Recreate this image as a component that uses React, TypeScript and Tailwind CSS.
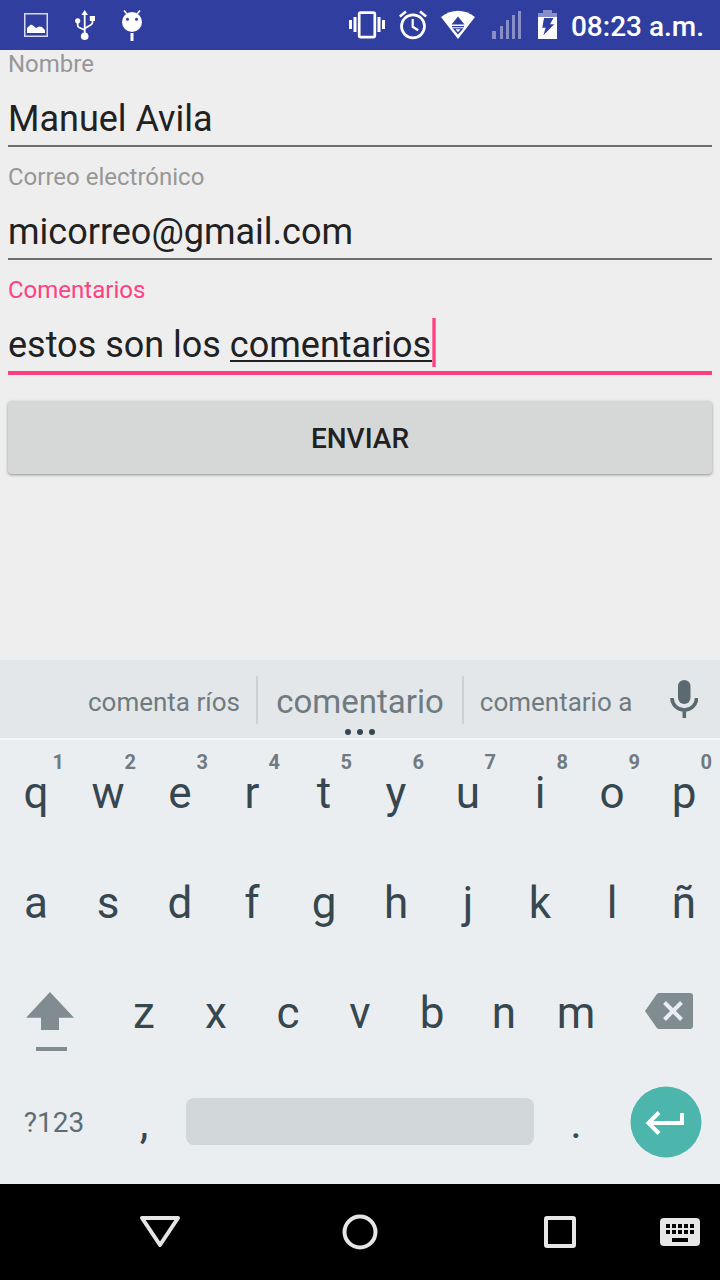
import { useState } from "react";
import type { ReactNode } from "react";

function StatusBar() {
  return (
    <header className="flex h-[50px] items-center justify-between bg-[#303f9f] pl-6 pr-4 text-white">
      <div className="flex items-center gap-[27px]">
        <svg viewBox="24 10 24 30" className="h-[30px] w-6" aria-hidden="true">
          <rect x="24.75" y="13.75" width="22.5" height="22.5" fill="none" stroke="#d6d9ec" strokeWidth="1.5" />
          <path d="M27 33V28l4-3.500 2 1 3 2.500 3-1.500 3 .5 3 3V33z" fill="#fff" />
        </svg>
        <svg viewBox="75 10 20 30" className="h-[30px] w-5" aria-hidden="true">
          <path d="M84.700 13v22M77.700 22v3.500q0 1.500 1.500 2l5.500 2.500M92.500 19v3q0 2-1.500 2.800L84.700 28.500" fill="none" stroke="#fff" strokeWidth="1.8" />
          <path d="M84.700 10l3.300 5h-6.600zM89.800 16h5.200v5h-5.200z" fill="#fff" />
          <circle cx="77.700" cy="20.800" r="2.600" fill="#fff" />
          <circle cx="84.700" cy="36.200" r="3.800" fill="#fff" />
        </svg>
        <svg viewBox="122 10 20 31" className="h-[31px] w-5" aria-hidden="true">
          <circle cx="132" cy="22" r="10" fill="#fff" />
          <path d="M124 10.500l3 3.500M140 10.500l-3 3.500" stroke="#fff" strokeWidth="1.600" />
          <path d="M130.500 33h3v8h-3z" fill="#fff" />
          <circle cx="127.500" cy="19.300" r="1.500" fill="#303f9f" />
          <circle cx="136.500" cy="19.300" r="1.500" fill="#303f9f" />
        </svg>
      </div>
      <div className="flex items-center gap-[14px]">
        <svg viewBox="349 10 36 30" className="h-[30px] w-9" aria-hidden="true">
          <rect x="359.200" y="12.700" width="15.600" height="24.400" rx="1.500" fill="none" stroke="#fff" strokeWidth="2.700" />
          <path d="M349 20h3v9h-3zM353.500 17h3v15h-3zM377.500 17h3v15h-3zM382 20h3v9h-3z" fill="#fff" />
        </svg>
        <svg viewBox="399 10 28 30" className="h-[30px] w-7" aria-hidden="true">
          <circle cx="413" cy="26.300" r="11.500" fill="none" stroke="#fff" strokeWidth="2.700" />
          <path d="M412.700 19v7.800l5.500 3.400" fill="none" stroke="#fff" strokeWidth="2.200" />
          <path d="M399.800 16.500l6.200-5M426.200 16.500l-6.200-5" stroke="#fff" strokeWidth="2.600" />
        </svg>
        <svg viewBox="441 10 37 30" className="h-[30px] w-[37px]" aria-hidden="true">
          <path d="M441 17q17-12.500 34 0L458 39z" fill="#fff" />
          <path d="M458 16.500l6.500 8h-13zM452 26h12v1.300h-12zM452.500 28.300h11l-5.500 6.200z" fill="#303f9f" />
          <path d="M455.500 29.300h5l-2.500 3z" fill="#fff" />
        </svg>
        <svg viewBox="492 10 32 30" className="h-[30px] w-8" aria-hidden="true">
          <path d="M492 31h4v8h-4zM500 26h3v13h-3zM506 20h3v19h-3zM512 15h3v24h-3zM518 11h3v28h-3z" fill="#888fc6" />
        </svg>
        <svg viewBox="538 10 19 30" className="h-[30px] w-[19px]" aria-hidden="true">
          <path d="M543 10h9v3h5v4h-19v-4h5z" fill="#888fc6" />
          <path d="M538 17h19v22h-19z" fill="#fff" />
          <path d="M544 18h9.500L550 24.300h4.300L543.300 35.300l2.400-7.600h-3.400z" fill="#303f9f" />
        </svg>
        <time className="pt-1 text-[28px] leading-8 font-medium whitespace-nowrap">08:23 a.m.</time>
      </div>
    </header>
  );
}

const underlines = {
  idle: "h-[69px] border-b-2 border-[#6e6e6e]",
  active: "h-[71px] border-b-4 border-[#ff4081]",
};

function Field(props: {
  id: string;
  label: string;
  type: string;
  initial: string;
  active?: boolean;
  children?: ReactNode;
}) {
  const [value, setValue] = useState(props.initial);
  return (
    <div>
      <label
        htmlFor={props.id}
        className={`block h-7 text-2xl leading-7 ${props.active ? "text-[#ff4081]" : "text-[#979797]"}`}
      >
        {props.label}
      </label>
      <div className="relative">
        <input
          id={props.id}
          type={props.type}
          value={value}
          onChange={(e) => setValue(e.target.value)}
          className={`block w-full bg-transparent pt-[14px] text-4xl text-[#212121] outline-none ${
            props.active ? underlines.active : underlines.idle
          }`}
        />
        {props.children}
      </div>
    </div>
  );
}

function Suggestions() {
  return (
    <div className="flex h-20 border-b-2 border-[#f3f6f8] bg-[#e3e7ea] pl-[72px] text-[#6f7b80]">
      <button type="button" className="flex-[9] pt-1.5 text-[26px] whitespace-nowrap">
        comenta ríos
      </button>
      <span className="mt-4 mb-3.5 w-0.5 bg-[#cbd0d3]" />
      <button type="button" className="relative flex-[10] pt-1.5 text-[33px]">
        comentario
        <span className="absolute inset-x-0 bottom-[3px] flex justify-center gap-1.5">
          <i className="size-1.5 rounded-full bg-[#37474f]" />
          <i className="size-1.5 rounded-full bg-[#37474f]" />
          <i className="size-1.5 rounded-full bg-[#37474f]" />
        </span>
      </button>
      <span className="mt-4 mb-3.5 w-0.5 bg-[#cbd0d3]" />
      <button type="button" className="flex-[9] pt-1.5 text-[26px] whitespace-nowrap">
        comentario a
      </button>
      <button type="button" aria-label="Voz" className="flex w-[72px] items-center justify-center">
        <svg viewBox="669 680 28 38" className="h-[38px] w-7" aria-hidden="true">
          <rect x="677" y="680" width="12.500" height="24" rx="6.200" fill="#5b6a70" />
          <path d="M671 698a12.300 12 0 0 0 24.600 0M683.300 710v8" fill="none" stroke="#5b6a70" strokeWidth="3.600" />
        </svg>
      </button>
    </div>
  );
}

function Key({ label, hint }: { label: string; hint?: string }) {
  return (
    <button type="button" className="relative col-span-2 pb-1 text-[44px] leading-none text-[#37474f]">
      {label}
      {hint && (
        <span className="absolute top-2.5 right-2 text-xl leading-6 font-bold text-[#6f7b80]">{hint}</span>
      )}
    </button>
  );
}

function Keyboard() {
  return (
    <section aria-label="Teclado" className="border-t-2 border-[#eceff1] bg-[#ebeef1]">
      <Suggestions />
      <div className="grid auto-rows-[110px] grid-cols-20 pb-1">
        {"qwertyuiop".split("").map((k, i) => (
          <Key key={k} label={k} hint={"1234567890"[i]} />
        ))}
        {"asdfghjklñ".split("").map((k) => (
          <Key key={k} label={k} />
        ))}
        <button type="button" aria-label="Mayúsculas" className="col-span-3 flex items-center pt-3 pl-[26px]">
          <svg viewBox="26 991 48 60" className="h-[60px] w-12" aria-hidden="true">
            <path d="M50 992l24 25.800H59V1030H41v-12.200H26zM36 1047h31v4H36z" fill="#818c90" />
          </svg>
        </button>
        {"zxcvbnm".split("").map((k) => (
          <Key key={k} label={k} />
        ))}
        <button type="button" aria-label="Borrar" className="col-span-3 flex items-center justify-center pb-2 pl-1.5">
          <svg viewBox="645 993 48 36" className="h-9 w-12" aria-hidden="true">
            <path d="M659 993h31q3 0 3 3v30q0 3-3 3h-31q-1.500 0-2.500-1.500L645 1011l11.500-16.500q1-1.500 2.500-1.500z" fill="#818c90" />
            <path d="M664.500 1002.500l17 17M681.500 1002.500l-17 17" stroke="#ebeef1" strokeWidth="4" />
          </svg>
        </button>
        <button type="button" className="col-span-3 pb-1 text-[28px] text-[#5f6d73]">
          ?123
        </button>
        <Key label="," />
        <button type="button" aria-label="Espacio" className="col-span-10 flex items-center px-1.5 pb-2">
          <span className="h-[47px] w-full rounded-lg bg-[#d1d6d9]" />
        </button>
        <Key label="." />
        <button type="button" aria-label="Intro" className="col-span-3 flex items-center justify-center pb-1.5">
          <svg viewBox="630 1086 72 72" className="size-[72px]" aria-hidden="true">
            <circle cx="666" cy="1122" r="35.500" fill="#4db6ac" />
            <path d="M682 1113v10H648M659 1112.500l-10.500 10.500 10.500 10.500" fill="none" stroke="#fff" strokeWidth="4" />
          </svg>
        </button>
      </div>
    </section>
  );
}

function NavBar() {
  return (
    <nav className="flex h-24 bg-black pr-5 pl-[60px]" aria-label="Sistema">
      <button type="button" aria-label="Atrás" className="flex flex-1 items-center justify-center">
        <svg viewBox="0 0 42 36" className="h-9 w-[42px]" aria-hidden="true">
          <path d="M3 4h36L21 31z" fill="none" stroke="#e6e6e6" strokeWidth="4" strokeLinejoin="round" />
        </svg>
      </button>
      <button type="button" aria-label="Inicio" className="flex flex-1 items-center justify-center">
        <svg viewBox="0 0 36 36" className="size-9" aria-hidden="true">
          <circle cx="18" cy="18" r="15.500" fill="none" stroke="#e6e6e6" strokeWidth="4" />
        </svg>
      </button>
      <button type="button" aria-label="Recientes" className="flex flex-1 items-center justify-center">
        <svg viewBox="0 0 32 32" className="size-8" aria-hidden="true">
          <rect x="2" y="2" width="28" height="28" rx="1" fill="none" stroke="#e6e6e6" strokeWidth="4" />
        </svg>
      </button>
      <button type="button" aria-label="Cambiar teclado" className="flex w-10 items-center">
        <svg viewBox="0 0 40 28" className="h-7 w-10" aria-hidden="true">
          <rect width="40" height="28" rx="4" fill="#e6e6e6" />
          <path
            d="M6 6h4v4H6zM12 6h4v4h-4zM18 6h4v4h-4zM24 6h4v4h-4zM30 6h4v4h-4zM6 12h4v4H6zM12 12h4v4h-4zM18 12h4v4h-4zM24 12h4v4h-4zM30 12h4v4h-4zM12 20h16v4H12z"
            fill="#000"
          />
        </svg>
      </button>
    </nav>
  );
}

export default function App() {
  return (
    <div className="flex min-h-screen flex-col bg-[#eeeeee] font-[Roboto,sans-serif]">
      <StatusBar />
      <main className="flex-1 px-2">
        <form className="flex flex-col gap-4" onSubmit={(e) => e.preventDefault()}>
          <Field id="nombre" label="Nombre" type="text" initial="Manuel Avila" />
          <Field id="correo" label="Correo electrónico" type="email" initial="micorreo@gmail.com" />
          <Field id="comentarios" label="Comentarios" type="text" initial="estos son los comentarios" active>
            <span className="absolute top-14 left-[222px] h-0.5 w-[202px] bg-[#212121]" />
            <span className="absolute top-[14px] left-[424px] h-[49px] w-1 border-x border-[#f87aa5] bg-[#ff4081]" />
          </Field>
          <button
            type="submit"
            className="mt-2.5 h-[73px] rounded-sm bg-[#d6d8d7] pt-0.5 text-[28px] font-medium text-[#212121] shadow-[0_1px_3px_rgba(0,0,0,0.4)]"
          >
            ENVIAR
          </button>
        </form>
      </main>
      <Keyboard />
      <NavBar />
    </div>
  );
}
